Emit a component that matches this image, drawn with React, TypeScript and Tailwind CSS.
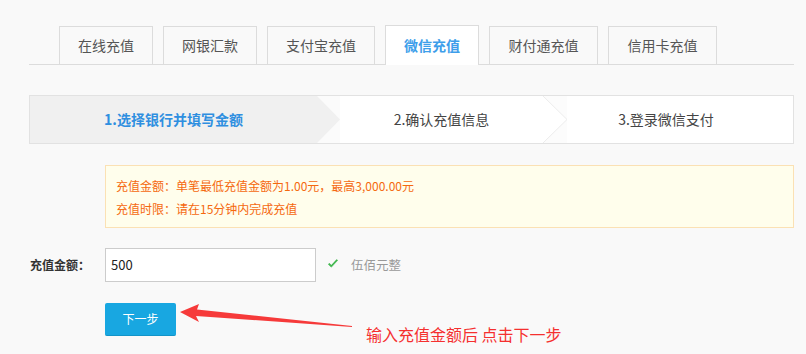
import React from "react";

const tabs = [
  { label: "在线充值", w: "w-[94px]" },
  { label: "网银汇款", w: "w-[94px]" },
  { label: "支付宝充值", w: "w-[108px]" },
  { label: "微信充值", w: "w-[94px]", active: true },
  { label: "财付通充值", w: "w-[109px]" },
  { label: "信用卡充值", w: "w-[109px]" },
];

export default function App() {
  return (
    <div
      className="relative w-[806px] h-[354px] overflow-hidden bg-[#f9f9f9] text-[#333]"
      style={{ fontFamily: '"Noto Sans CJK SC", "Noto Sans", sans-serif' }}
    >
      {/* Tabs */}
      <div className="pt-[26px] pl-[29px]">
        <div className="w-[765px] border-b border-[#dcdcdc] flex items-end gap-[10px] pl-[30px] h-[39px]">
          {tabs.map((t) =>
            t.active ? (
              <div
                key={t.label}
                className={`${t.w} h-[40px] -mb-px bg-white border border-b-0 border-[#dcdcdc] flex items-center justify-center text-[14px] font-bold text-[#3d9eea] pb-[1px]`}
              >
                {t.label}
              </div>
            ) : (
              <div
                key={t.label}
                className={`${t.w} h-[38px] border border-b-0 border-[#dcdcdc] flex items-center justify-center text-[14px] text-[#555]`}
              >
                {t.label}
              </div>
            )
          )}
        </div>
      </div>

      {/* Steps */}
      <div className="ml-[29px] mt-[30px] w-[765px] h-[49px] border border-[#e2e2e2] bg-white flex">
        <div className="w-[287px] h-full bg-[#f0f0f0] flex items-center justify-center text-[14px] font-bold text-[#2f8fe0]">
          1.选择银行并填写金额
        </div>
        <svg width="23" height="47" viewBox="0 0 23 47" className="shrink-0">
          <rect x="0" y="0" width="23" height="47" fill="#fbfbfb" />
          <polygon points="0,0 0,47 23,23.5" fill="#f0f0f0" />
        </svg>
        <div className="w-[203px] h-full flex items-center justify-center text-[14px] text-[#444]">
          2.确认充值信息
        </div>
        <svg width="24" height="47" viewBox="0 0 24 47" className="shrink-0">
          <rect x="0" y="0" width="24" height="47" fill="#fcfcfc" />
          <polygon points="0,0 0,47 24,23.5" fill="#ffffff" />
          <polyline points="0,0 24,23.5 0,47" fill="none" stroke="#ececec" strokeWidth="1" />
        </svg>
        <div className="flex-1 h-full flex items-center justify-center pr-[28px] text-[14px] text-[#444]">
          3.登录微信支付
        </div>
      </div>

      {/* Notice */}
      <div className="ml-[105px] mt-[21px] w-[689px] h-[63px] border border-[#fbe1b4] bg-[#fffeec] px-[10px] pt-[8px] text-[12px] leading-[23px] text-[#f5690f]">
        <div>充值金额：单笔最低充值金额为1.00元，最高3,000.00元</div>
        <div>充值时限：请在15分钟内完成充值</div>
      </div>

      {/* Amount row */}
      <div className="mt-[20px] flex items-center h-[34px]">
        <div className="w-[105px] shrink-0 pl-[30px] text-[12px] font-bold text-[#333] whitespace-nowrap">
          充值金额：
        </div>
        <div className="w-[211px] shrink-0 h-[34px] border border-[#cccccc] bg-white flex items-center pl-[5px] text-[13px] text-[#222]">
          500
        </div>
        <svg width="12" height="12" viewBox="0 0 12 12" className="ml-[11px] mt-[-2px] shrink-0">
          <path d="M1 6.2 L4.3 9.6 L11 2.2 L9.6 1.2 L4.3 7 L2.4 4.9 Z" fill="#3cb34a" />
          <path d="M1.6 6.3 L4.3 9 L10.6 2.3" fill="none" stroke="#6fd07a" strokeWidth="0.6" />
        </svg>
        <div className="ml-[12px] text-[12.5px] text-[#999]">伍佰元整</div>
      </div>

      {/* Button row */}
      <div className="mt-[21px] flex items-start">
        <div className="ml-[105px] w-[71px] h-[33px] shrink-0 rounded-[2px] bg-[#18a7e1] border-b border-[#1394c8] flex items-center justify-center text-[12px] text-white">
          下一步
        </div>
        <div className="ml-[190px] mt-[19px] text-[16px] leading-[24px] text-[#f5302f] whitespace-nowrap">
          输入充值金额后 点击下一步
        </div>
      </div>

      {/* Red annotation arrow */}
      <svg
        className="absolute left-0 top-0 pointer-events-none"
        width="806"
        height="354"
        viewBox="0 0 806 354"
      >
        <polygon
          points="180,312 199,304 197,309.5 352,326 352,327 196,316 199,322"
          fill="#f63a3a"
        />
      </svg>
    </div>
  );
}
